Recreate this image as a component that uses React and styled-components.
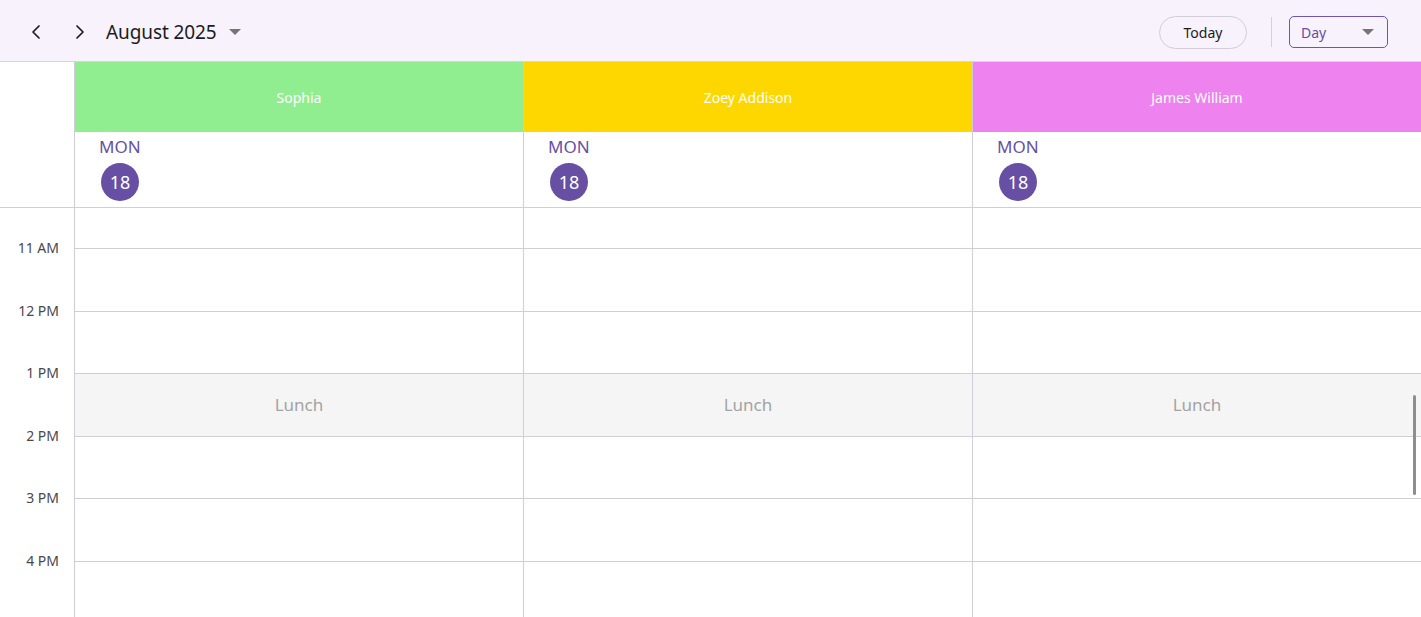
import styled, { createGlobalStyle } from "styled-components";

const GlobalStyle = createGlobalStyle`
  html, body { margin: 0; padding: 0; background: #fff; }
  body { font-family: "Noto Sans", "Open Sans", sans-serif; overflow: hidden; }
`;

const resources = [
  { name: "Sophia", color: "#90ee90" },
  { name: "Zoey Addison", color: "#ffd700" },
  { name: "James William", color: "#ee82ee" },
];

// first row is partly scrolled out of view, last one is cut by the window
const slots = [
  { label: "", height: 40 },
  { label: "11 AM", height: 62.5 },
  { label: "12 PM", height: 62.5 },
  { label: "1 PM", height: 62.5, lunch: true },
  { label: "2 PM", height: 62.5 },
  { label: "3 PM", height: 62.5 },
  { label: "4 PM", height: 62.5 },
];

const Page = styled.div`
  width: 1421px;
  height: 617px;
  display: flex;
  flex-direction: column;
  overflow: hidden;
`;

const Toolbar = styled.div`
  height: 62px;
  flex-shrink: 0;
  box-sizing: border-box;
  background: #f7f2fb;
  border-bottom: 1px solid #d9d3e0;
  display: flex;
  align-items: center;
  padding: 3px 33px 0 22px;
`;

const NavButton = styled.button`
  width: 28px;
  height: 32px;
  border: none;
  background: transparent;
  display: flex;
  align-items: center;
  justify-content: center;
  padding: 0;
  margin-right: ${(p) => p.$gap || 0}px;
  cursor: pointer;
`;

const Title = styled.div`
  display: flex;
  align-items: center;
  gap: 12px;
  font-size: 19px;
  color: #1c1b1f;
  letter-spacing: -0.1px;
`;

const Spacer = styled.div`
  flex: 1;
`;

const TodayButton = styled.button`
  height: 33px;
  width: 88px;
  border-radius: 17px;
  border: 1px solid #d3ccd9;
  background: transparent;
  font-family: inherit;
  font-size: 14px;
  color: #1c1b1f;
  padding: 0;
`;

const Divider = styled.div`
  width: 1px;
  height: 30px;
  background: #d6d0dc;
  margin: 0 17px 0 24px;
`;

const ViewSelect = styled.div`
  width: 99px;
  height: 32px;
  border: 1px solid #6f56ad;
  border-radius: 5px;
  display: flex;
  align-items: center;
  justify-content: space-between;
  padding: 0 13px 0 11px;
  box-sizing: border-box;
  font-size: 14px;
  color: #6750a4;
`;

const Grid = styled.div`
  flex: 1;
  position: relative;
  display: grid;
  grid-template-columns: 74px repeat(3, 449px);
  align-content: start;
`;

const Corner = styled.div`
  border-bottom: 1px solid #d0ccd8;
`;

const ResourceHeader = styled.div`
  display: flex;
  flex-direction: column;
  border-bottom: 1px solid #d0ccd8;
  border-left: 1px solid #d0ccd8;
`;

const ResourceName = styled.div`
  height: 70px;
  background: ${(p) => p.$color};
  color: #fff;
  font-size: 14px;
  display: flex;
  align-items: center;
  justify-content: center;
`;

const DateCell = styled.div`
  height: 75px;
  padding: 4px 0 0 24px;
  box-sizing: border-box;
  display: flex;
  flex-direction: column;
  align-items: flex-start;
`;

const DayName = styled.div`
  font-size: 17px;
  line-height: 22px;
  color: #6750a4;
`;

const DayNumber = styled.div`
  width: 38px;
  height: 38px;
  margin: 5px 0 0 2px;
  border-radius: 50%;
  background: #6750a4;
  color: #fff;
  font-size: 18px;
  display: flex;
  align-items: center;
  justify-content: center;
`;

const TimeCell = styled.div`
  height: ${(p) => p.$h}px;
  display: flex;
  justify-content: flex-end;
  padding-right: 15px;
  box-sizing: border-box;
`;

const TimeLabel = styled.span`
  font-size: 14px;
  color: #4a474f;
  line-height: 20px;
  margin-top: -10px;
`;

const SlotCell = styled.div`
  height: ${(p) => p.$h}px;
  box-sizing: border-box;
  border-top: ${(p) => (p.$first ? "none" : "1px solid #d0ccd8")};
  border-left: 1px solid #d0ccd8;
  background: ${(p) => (p.$lunch ? "#f5f5f5" : "#fff")};
  display: flex;
  align-items: center;
  justify-content: center;
  font-size: 17px;
  color: #a3a3a3;
`;

const Scrollbar = styled.div`
  position: absolute;
  right: 5px;
  top: 333px;
  width: 3px;
  height: 100px;
  border-radius: 2px;
  background: #8e8e8e;
`;

const Chevron = ({ dir }) => (
  <svg width="12" height="16" viewBox="0 0 12 16">
    <polyline
      points={dir === "left" ? "9,2 3,8 9,14" : "3,2 9,8 3,14"}
      fill="none"
      stroke="#1c1b1f"
      strokeWidth="1.7"
      strokeLinecap="round"
      strokeLinejoin="round"
    />
  </svg>
);

const Caret = () => (
  <svg width="12" height="6" viewBox="0 0 12 6">
    <polygon points="0,0 12,0 6,6" fill="#757575" />
  </svg>
);

export default function App() {
  return (
    <>
      <GlobalStyle />
      <Page>
        <Toolbar>
          <NavButton $gap={16}>
            <Chevron dir="left" />
          </NavButton>
          <NavButton $gap={12}>
            <Chevron dir="right" />
          </NavButton>
          <Title>
            August 2025
            <Caret />
          </Title>
          <Spacer />
          <TodayButton>Today</TodayButton>
          <Divider />
          <ViewSelect>
            Day
            <Caret />
          </ViewSelect>
        </Toolbar>
        <Grid>
          <Corner />
          {resources.map((r) => (
            <ResourceHeader key={r.name}>
              <ResourceName $color={r.color}>{r.name}</ResourceName>
              <DateCell>
                <DayName>MON</DayName>
                <DayNumber>18</DayNumber>
              </DateCell>
            </ResourceHeader>
          ))}
          {slots.map((s, row) => [
            <TimeCell key={"t" + row} $h={s.height}>
              <TimeLabel>{s.label}</TimeLabel>
            </TimeCell>,
            ...resources.map((r) => (
              <SlotCell
                key={r.name + row}
                $h={s.height}
                $first={row === 0}
                $lunch={s.lunch}
              >
                {s.lunch ? "Lunch" : null}
              </SlotCell>
            )),
          ])}
          <Scrollbar />
        </Grid>
      </Page>
    </>
  );
}
